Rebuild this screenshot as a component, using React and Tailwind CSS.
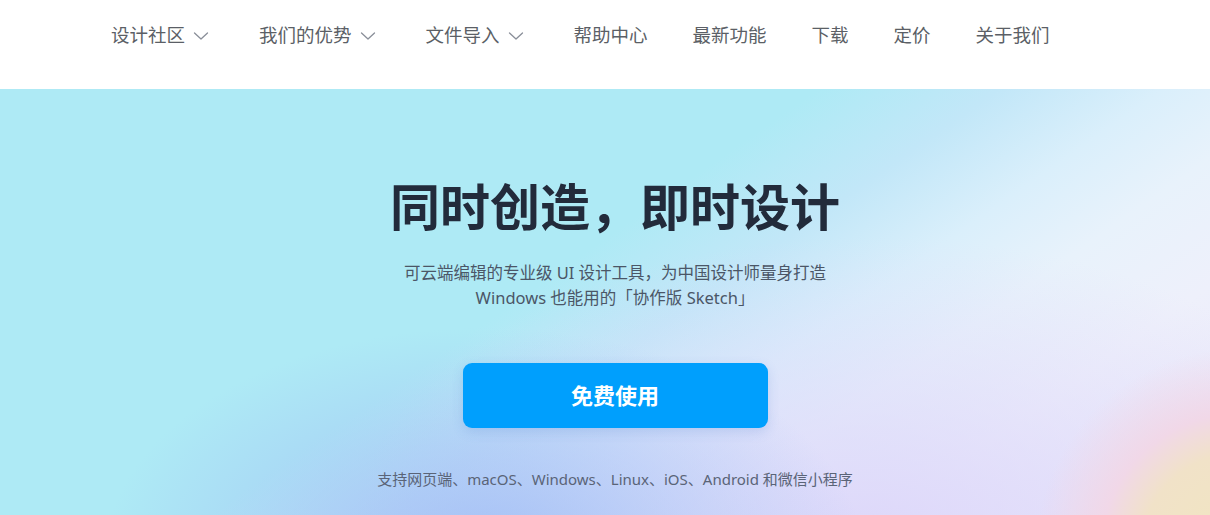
import React from "react";

const Chevron = () => (
  <svg width="16" height="10" viewBox="0 0 16 10" fill="none" className="ml-[8px] mr-[5px] mt-[1px]">
    <path d="M1.5 2 L8 8 L14.5 2" stroke="#8a8f99" strokeWidth="1.3" strokeLinecap="round" strokeLinejoin="round" />
  </svg>
);

const items = [
  { t: "设计社区", c: true },
  { t: "我们的优势", c: true },
  { t: "文件导入", c: true },
  { t: "帮助中心" },
  { t: "最新功能" },
  { t: "下载" },
  { t: "定价" },
  { t: "关于我们" },
];

export default function App() {
  return (
    <div className="w-[1210px] h-[515px] overflow-hidden bg-white" style={{ fontFamily: '"Noto Sans", "Noto Sans CJK SC", sans-serif' }}>
      <header className="h-[89px] flex items-center pl-[111px] pb-[18px] gap-[45px] bg-white">
        {items.map((it) => (
          <div key={it.t} className="flex items-center text-[18.5px] text-[#5b5f66] leading-none">
            <span>{it.t}</span>
            {it.c && <Chevron />}
          </div>
        ))}
      </header>
      <section className="h-[426px] pl-[20px] flex flex-col items-center bg-[#aeeaf5] bg-[radial-gradient(circle_at_102.5%_109%,#f1e6c0_0px,#f1e2c8_100px,#f1d8e8_140px,rgba(236,222,248,0)_205px),radial-gradient(ellipse_380px_230px_at_40%_110%,rgba(160,188,245,0.95)_0%,rgba(165,192,245,0)_100%),radial-gradient(ellipse_520px_300px_at_72%_105%,rgba(220,214,250,0.95)_0%,rgba(222,216,250,0)_100%),linear-gradient(145deg,#aeeaf5_0%,#aeeaf5_45%,#c2e7f8_55%,#daeffb_64%,#e8f2fb_72%,#eef0fb_82%,#eceafa_92%,#ebe6f8_100%)]">
        <h1 className="mt-[88px] text-[50px] leading-[60px] font-bold text-[#222b3b]">同时创造，即时设计</h1>
        <p className="mt-[23px] text-[16.5px] leading-[25px] text-[#4b5667] text-center">
          可云端编辑的专业级 UI 设计工具，为中国设计师量身打造
          <br />
          Windows 也能用的「协作版 Sketch」
        </p>
        <button className="mt-[53px] w-[305px] h-[65px] rounded-[9px] bg-[#009ffd] text-white text-[22px] font-bold shadow-[0_4px_12px_rgba(60,110,200,0.18)]">
          免费使用
        </button>
        <p className="mt-[41px] text-[15px] leading-[20px] text-[#5a6477]">
          支持网页端、macOS、Windows、Linux、iOS、Android 和微信小程序
        </p>
      </section>
    </div>
  );
}
